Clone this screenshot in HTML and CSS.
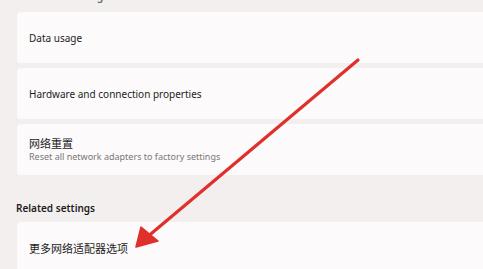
FILE: index.html
```html
<!DOCTYPE html>
<html>
<head>
<meta charset="utf-8">
<link rel="stylesheet" href="styles.css">
</head>
<body>
<div class="page">
  <div class="section-title cut">Advanced sharing</div>
  <div class="card"><div class="title">Data usage</div></div>
  <div class="card"><div class="title">Hardware and connection properties</div></div>
  <div class="card">
    <div class="title cjk">网络重置</div>
    <div class="sub">Reset all network adapters to factory settings</div>
  </div>
  <div class="section-title related">Related settings</div>
  <div class="card"><div class="title cjk">更多网络适配器选项</div></div>
  <svg class="arrow" width="483" height="269" viewBox="0 0 483 269">
    <line x1="358" y1="60" x2="146" y2="238" stroke="#e0302c" stroke-width="3.2" stroke-linecap="round"/>
    <polygon points="136,247 141,227 158,241" fill="#e0302c" stroke="#e0302c" stroke-width="1.5" stroke-linejoin="round"/>
  </svg>
</div>
</body>
</html>
```
FILE: styles.css
```css
html, body {
  margin: 0;
  padding: 0;
  background: #f3efef;
  width: 483px;
  height: 269px;
  overflow: hidden;
}
.page {
  padding: 0 0 0 17px;
  font-family: "Noto Sans", "Noto Sans CJK SC", sans-serif;
  color: #1c1c1c;
  display: flex;
  flex-direction: column;
  gap: 5px;
}
.section-title {
  font-size: 10px;
  font-weight: 600;
  line-height: 14px;
  margin-left: -1px;
}
.cut {
  margin-top: -11px;
  margin-bottom: 4px;
  color: #666;
}
.related {
  margin-top: 21px;
  margin-bottom: 2px;
}
.card {
  background: #fcfafa;
  border-radius: 4px 0 0 4px;
  height: 51px;
  padding-left: 12px;
  display: flex;
  flex-direction: column;
  justify-content: center;
}
.title {
  font-size: 10px;
  line-height: 14px;
}
.cjk {
  font-family: "Noto Sans CJK SC", sans-serif;
  font-size: 11px;
}
.sub {
  font-size: 9px;
  line-height: 13px;
  color: #7a7878;
}
.arrow {
  position: absolute;
  left: 0;
  top: 0;
  pointer-events: none;
}
```
